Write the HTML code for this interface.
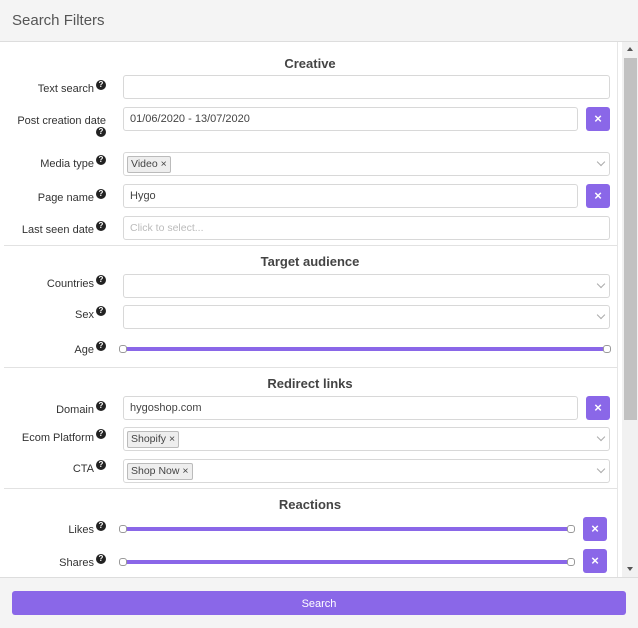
<!DOCTYPE html>
<html><head><style>
*{box-sizing:border-box;margin:0;padding:0}
body{width:638px;height:628px;background:#fff;font-family:"Liberation Sans",sans-serif;position:relative;overflow:hidden;color:#333}
.hdr{position:absolute;left:0;top:0;width:638px;height:42px;background:#f4f4f4;border-bottom:1px solid #ddd}
.hdr span{position:absolute;left:12px;top:12px;font-size:15px;color:#555}
.ftr{position:absolute;left:0;top:577px;width:638px;height:51px;background:#f4f4f4;border-top:1px solid #ddd}
.sbtn{position:absolute;left:12px;top:591px;width:614px;height:24px;background:#8a67e8;border-radius:3px;color:#fff;font-size:11px;text-align:center;line-height:26px}
.sb{position:absolute;left:622px;top:42px;width:16px;height:535px;background:#f1f1f1}
.thumb{position:absolute;left:624px;top:58px;width:13px;height:362px;background:#c1c1c1}
.vl{position:absolute;left:617px;top:42px;width:1px;height:535px;background:#e6e6e6}
.h{position:absolute;left:0;width:620px;text-align:center;font-weight:bold;font-size:13px;color:#444}
.l{position:absolute;right:532px;font-size:11px;color:#333;text-align:right;white-space:nowrap;margin-top:2px}
.q{display:inline-block;width:10px;height:10px;border-radius:50%;background:#222;color:#fff;font-size:8px;font-weight:bold;line-height:10px;text-align:center;vertical-align:top;margin-left:2px;position:relative;top:-3px}
.in{position:absolute;left:123px;height:24px;border:1px solid #d8d8d8;border-radius:3px;font-size:11px;color:#444;padding-left:6px;line-height:22px;background:#fff}
.w1{width:487px}.w2{width:455px}
.x{position:absolute;left:586px;width:24px;height:24px;background:#8a67e8;border-radius:3px;color:#fff;font-size:13px;font-weight:bold;text-align:center;line-height:24px}
.chev{position:absolute;right:5px;top:6px;width:6px;height:6px;border-right:1.5px solid #aaa;border-bottom:1.5px solid #aaa;transform:rotate(45deg)}
.tag{display:inline-block;border:1px solid #bbb;background:#eee;border-radius:2px;padding:0 3px;font-size:10.5px;line-height:15px;margin-top:3px;margin-left:-3px;color:#444}
.sep{position:absolute;left:4px;width:613px;height:1px;background:#e2e2e2}
.sl{position:absolute;height:4px;background:#8a67e8}
.k{position:absolute;width:8px;height:8px;border:1px solid #999;border-radius:3px;background:#fff}
</style></head><body>
<div class="hdr"><span>Search Filters</span></div>
<div class="vl"></div>
<div class="sb"></div><div class="thumb"></div>
<div style="position:absolute;left:627px;top:47px;border:3px solid transparent;border-bottom:4px solid #555;border-top:0"></div>
<div style="position:absolute;left:627px;top:567px;border:3px solid transparent;border-top:4px solid #555;border-bottom:0"></div>

<div class="h" style="top:56px">Creative</div>
<div class="l" style="top:81px">Text search<span class="q">?</span></div>
<div class="in w1" style="top:75px"></div>
<div class="l" style="top:113px;text-align:right">Post creation date<br><span class="q" style="top:0">?</span></div>
<div class="in w2" style="top:107px">01/06/2020 - 13/07/2020</div><div class="x" style="top:107px">×</div>
<div class="l" style="top:156px">Media type<span class="q">?</span></div>
<div class="in w1" style="top:152px"><span class="tag">Video ×</span><div class="chev"></div></div>
<div class="l" style="top:190px">Page name<span class="q">?</span></div>
<div class="in w2" style="top:184px">Hygo</div><div class="x" style="top:184px">×</div>
<div class="l" style="top:222px">Last seen date<span class="q">?</span></div>
<div class="in w1" style="top:216px;color:#bbb;font-size:10.5px">Click to select...</div>
<div class="sep" style="top:245px"></div>

<div class="h" style="top:254px">Target audience</div>
<div class="l" style="top:276px">Countries<span class="q">?</span></div>
<div class="in w1" style="top:274px"><div class="chev"></div></div>
<div class="l" style="top:307px">Sex<span class="q">?</span></div>
<div class="in w1" style="top:305px"><div class="chev"></div></div>
<div class="l" style="top:342px">Age<span class="q">?</span></div>
<div class="sl" style="left:124px;top:347px;width:483px"></div>
<div class="k" style="left:119px;top:345px"></div><div class="k" style="left:603px;top:345px"></div>
<div class="sep" style="top:367px"></div>

<div class="h" style="top:376px">Redirect links</div>
<div class="l" style="top:402px">Domain<span class="q">?</span></div>
<div class="in w2" style="top:396px">hygoshop.com</div><div class="x" style="top:396px">×</div>
<div class="l" style="top:430px">Ecom Platform<span class="q">?</span></div>
<div class="in w1" style="top:427px"><span class="tag">Shopify ×</span><div class="chev"></div></div>
<div class="l" style="top:461px">CTA<span class="q">?</span></div>
<div class="in w1" style="top:459px"><span class="tag">Shop Now ×</span><div class="chev"></div></div>
<div class="sep" style="top:488px"></div>

<div class="h" style="top:497px">Reactions</div>
<div class="l" style="top:522px">Likes<span class="q">?</span></div>
<div class="sl" style="left:124px;top:527px;width:445px"></div>
<div class="k" style="left:119px;top:525px"></div><div class="k" style="left:567px;top:525px"></div>
<div class="x" style="top:517px;left:583px">×</div>
<div class="l" style="top:555px">Shares<span class="q">?</span></div>
<div class="sl" style="left:124px;top:560px;width:445px"></div>
<div class="k" style="left:119px;top:558px"></div><div class="k" style="left:567px;top:558px"></div>
<div class="x" style="top:549px;left:583px">×</div>

<div class="ftr"></div>
<div class="sbtn">Search</div>
</body></html>
